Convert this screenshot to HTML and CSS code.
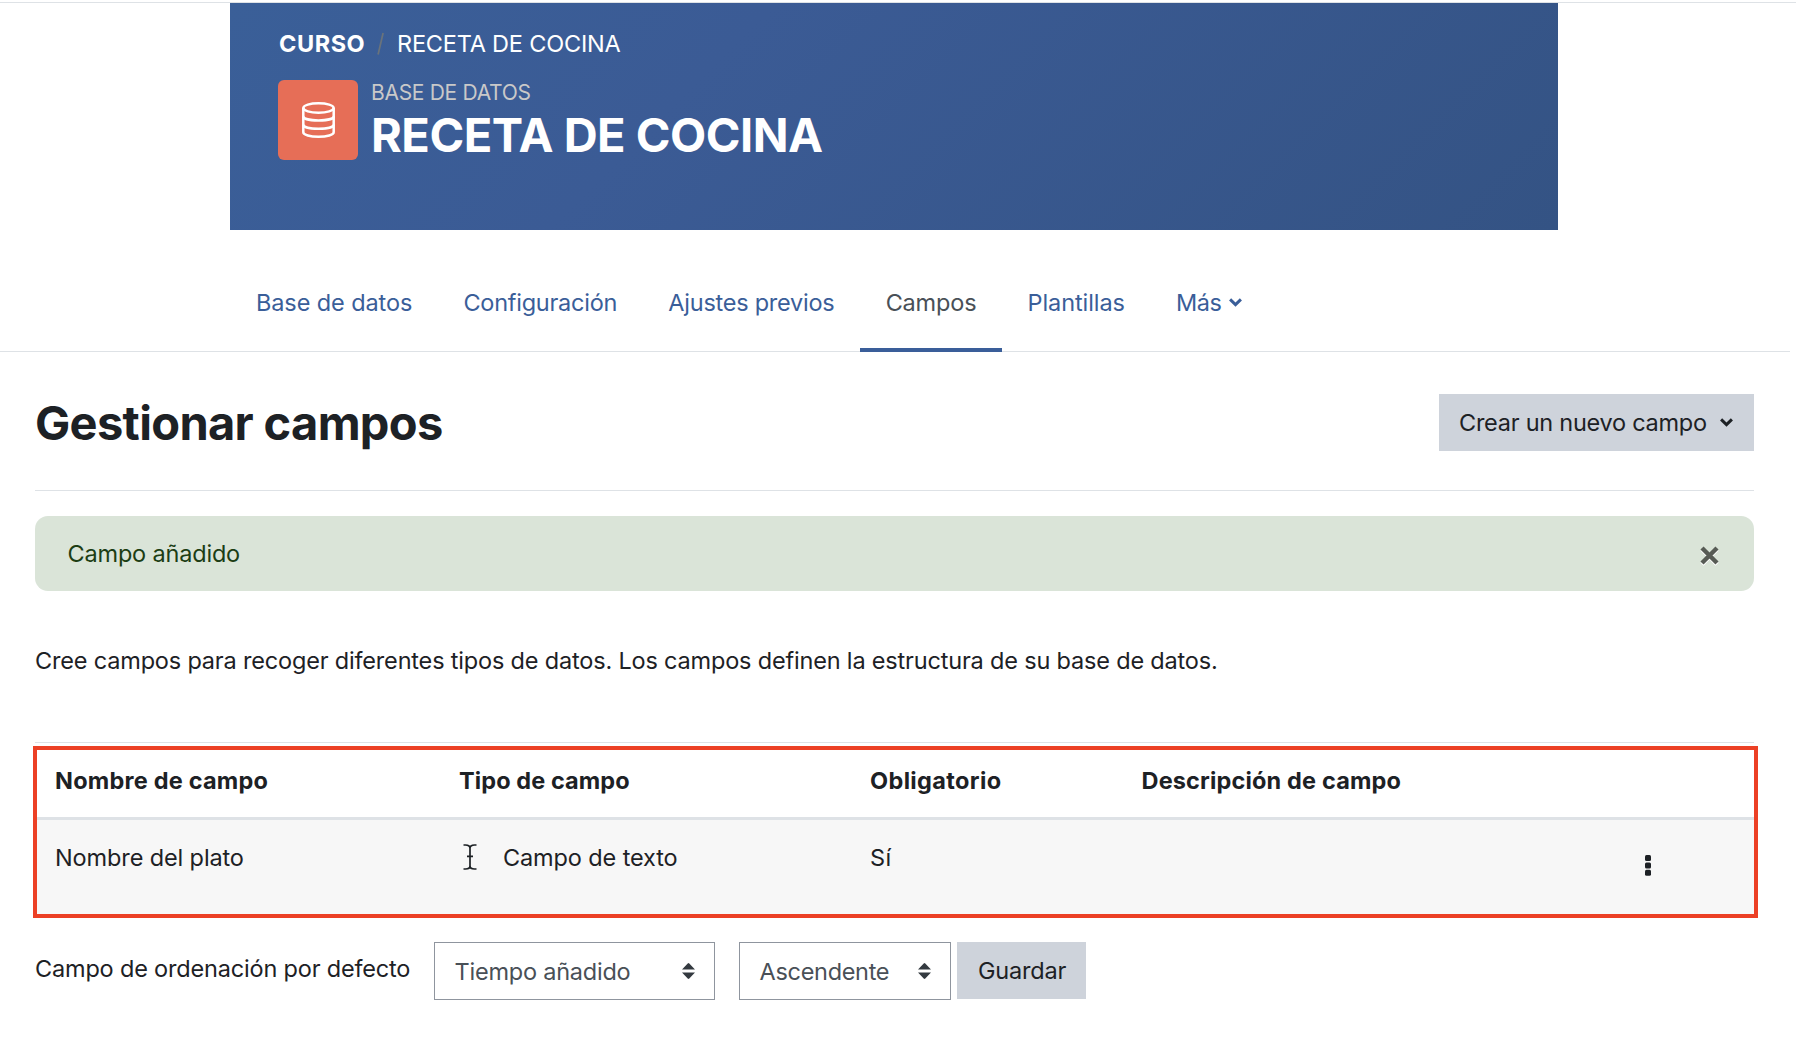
FILE: index.html
```html
<!DOCTYPE html>
<html lang="es">
<head>
<meta charset="utf-8">
<title>Receta de cocina</title>
<link rel="stylesheet" href="styles.css">
</head>
<body>
<header class="page-header">
  <nav class="breadcrumb">
    <a class="crumb-course">CURSO</a>
    <svg class="crumb-slash" viewBox="0 0 8 24" aria-hidden="true"><path d="M6.1 1 1.1 22.5" stroke="#6a737b" stroke-width="1.7"/></svg>
    <a class="crumb-current">RECETA DE COCINA</a>
  </nav>
  <div class="activity">
    <div class="activity-icon">
      <svg viewBox="0 0 33 36" fill="none" stroke="#fff" stroke-width="2.5"><ellipse cx="16.5" cy="6" rx="15.2" ry="4.7"/><path d="M1.3 6V30.2C1.3 32.9 8.1 34.7 16.5 34.7S31.7 32.9 31.7 30.2V6"/><path d="M1.3 14.2C1.3 16.8 8.1 18.5 16.5 18.5S31.7 16.8 31.7 14.2M1.3 22.5C1.3 25.1 8.1 26.8 16.5 26.8S31.7 25.1 31.7 22.5"/></svg>
    </div>
    <div class="activity-text">
      <div class="activity-type">BASE DE DATOS</div>
      <h1 class="activity-name">RECETA DE COCINA</h1>
    </div>
  </div>
</header>
<nav class="tabs">
  <a class="tab t-base">Base de datos</a>
  <a class="tab t-conf">Configuración</a>
  <a class="tab t-ajus">Ajustes previos</a>
  <a class="tab t-camp active">Campos</a>
  <a class="tab t-plan">Plantillas</a>
  <a class="tab t-mas">Más<svg class="chevron" viewBox="0 0 13 9" fill="none" stroke="currentColor" stroke-width="3"><path d="M1.1 1.4 6.5 6.6 11.9 1.4"/></svg></a>
</nav>
<main class="content">
  <div class="title-row">
    <h2 class="title">Gestionar campos</h2>
    <button class="btn btn-create">Crear un nuevo campo<svg class="chevron" viewBox="0 0 13 9" fill="none" stroke="currentColor" stroke-width="3"><path d="M1.1 1.4 6.5 6.6 11.9 1.4"/></svg></button>
  </div>
  <div class="alert">
    <span>Campo añadido</span>
    <svg class="close" viewBox="0 0 19 20" fill="none" stroke-width="4.4"><path d="M2 3.2 17 18.2M17 3.2 2 18.2" stroke="#fff"/><path d="M2 2 17 17M17 2 2 17" stroke="#575b55"/></svg>
  </div>
  <p class="intro">Cree campos para recoger diferentes tipos de datos. Los campos definen la estructura de su base de datos.</p>
  <div class="fields">
    <div class="row head">
      <div class="c-name">Nombre de campo</div>
      <div class="c-type">Tipo de campo</div>
      <div class="c-req">Obligatorio</div>
      <div class="c-desc">Descripción de campo</div>
    </div>
    <div class="row item">
      <div>Nombre del plato</div>
      <div class="type"><svg class="ibeam" viewBox="0 0 14 26" fill="none" stroke="#1d2125" stroke-width="1.7"><path d="M.5 1H2.5C5 1 7 2.2 7 4V22C7 23.8 5 25 2.5 25H.5M13.5 1H11.5C9 1 7 2.2 7 4M7 22C7 23.8 9 25 11.5 25H13.5M4 12.3H10"/></svg>Campo de texto</div>
      <div class="yes">Sí</div>
      <div></div>
      <div class="menu"><svg class="dots" viewBox="0 0 6 21" fill="#1d2125"><rect width="6" height="6" rx="1.5"/><rect y="7.4" width="6" height="6" rx="1.5"/><rect y="14.8" width="6" height="6" rx="1.5"/></svg></div>
    </div>
  </div>
  <div class="sort">
    <span class="sort-label">Campo de ordenación por defecto</span>
    <div class="select s-field"><span>Tiempo añadido</span><svg class="arrows" viewBox="0 0 13 16" fill="#343a40"><path d="M0 6.5 5.7.4Q6.5-.2 7.3.4L13 6.5zM0 9.5 5.7 15.6Q6.5 16.2 7.3 15.6L13 9.5z"/></svg></div>
    <div class="select s-dir"><span>Ascendente</span><svg class="arrows" viewBox="0 0 13 16" fill="#343a40"><path d="M0 6.5 5.7.4Q6.5-.2 7.3.4L13 6.5zM0 9.5 5.7 15.6Q6.5 16.2 7.3 15.6L13 9.5z"/></svg></div>
    <button class="btn btn-save">Guardar</button>
  </div>
</main>
</body>
</html>
```
FILE: styles.css
```css
* { box-sizing: border-box; }
body {
  margin: 0;
  padding-top: 2px;
  background: #fff;
  color: #1d2125;
  font: 400 23.5px/36px Inter, sans-serif;
  letter-spacing: -0.18px;
  white-space: nowrap;
}
h1, h2, p { margin: 0; }
svg { display: block; flex: none; }
body::before { content: ""; display: block; height: 1px; background: #dee2e6; }

.page-header {
  width: 1328px;
  height: 227px;
  margin-left: 230px;
  padding: 23px 48px 0;
  color: #fff;
  background: linear-gradient(135deg, #3a5f98 0%, #3b5b95 35%, #345384 100%);
}
.breadcrumb { display: flex; align-items: center; height: 36px; padding-left: 1px; }
.crumb-course { font-weight: 700; letter-spacing: .55px; }
.crumb-slash { width: 8px; height: 24px; margin: 0 11.5px 0 12.2px; }
.crumb-current { letter-spacing: -.2px; }
.activity { display: flex; margin-top: 18px; }
.activity-icon {
  display: flex; align-items: center; justify-content: center;
  width: 80px; height: 80px;
  padding-left: 1px;
  border-radius: 6px;
  background: #e66e57;
}
.activity-icon svg { width: 33px; height: 36px; }
.activity-text { margin-left: 13px; }
.activity-type { font-size: 21px; line-height: 26px; letter-spacing: -.3px; color: #c9c9c9; }
.activity-name { margin-top: 1px; font-size: 47px; line-height: 56px; font-weight: 700; letter-spacing: -.503px; }

.tabs {
  display: flex;
  width: 1790px;
  height: 122px;
  padding: 23px 0 0 230.4px;
  border-bottom: 1px solid #dee2e6;
}
.tab { display: flex; align-items: center; height: 99px; padding: 0 25.6px; color: #3a5e99; line-height: 99px; }
.tab.active { color: #495057; box-shadow: inset 0 -4px #3a5e99; }
.t-base { letter-spacing: -.1px; }
.t-conf { letter-spacing: -.25px; }
.t-ajus { letter-spacing: -.25px; }
.t-camp { letter-spacing: -.185px; }
.t-plan { letter-spacing: -.082px; }
.t-mas { letter-spacing: -.462px; }
.chevron { width: 13px; height: 9px; }
.t-mas .chevron { margin-left: 7.5px; }

.content { width: 1719px; margin-left: 35px; }
.title-row {
  display: flex; align-items: center; justify-content: space-between;
  height: 139px;
  padding: 0 0 1px;
  border-bottom: 1px solid #dee2e6;
}
.title { margin-top: 4px; font-size: 47px; line-height: 60px; font-weight: 700; letter-spacing: -.662px; }
.btn {
  display: flex; align-items: center;
  height: 57px;
  padding: 0 20px;
  border: 0;
  background: #ced3db;
  color: #1d2125;
  font: inherit;
  letter-spacing: -.194px;
}
.btn-create { width: 315px; margin-top: 4px; letter-spacing: -.257px; }
.btn-create .chevron { margin-left: 13.5px; }
.btn-save { width: 129px; padding: 1px 0 0 21px; }
.alert {
  display: flex; align-items: center; justify-content: space-between;
  height: 75px;
  margin-top: 25px;
  padding: 0 35px 0 32.5px;
  border-radius: 13px;
  background: #dae4d8;
  color: #1c3d14;
  letter-spacing: -.18px;
}
.close { width: 19px; height: 20px; margin-top: 5px; }
.intro { margin-top: 52px; }

.fields {
  width: 1725px;
  height: 172px;
  margin: 67px 0 0 -2px;
  border: 4px solid #ec4025;
  position: relative;
}
/* top rule of the table, seen just above the highlight frame */
.fields::before { content: ""; position: absolute; left: -2px; right: 0; top: -8px; height: 1px; background: #dee2e6; }
.row { display: grid; grid-template-columns: 404px 411px 271.5px 493.5px 1fr; padding-left: 18px; }
.head { height: 70px; padding-top: 13px; font-weight: 700; }
.c-name { letter-spacing: .216px; }
.c-type { letter-spacing: .09px; }
.c-req { letter-spacing: .36px; }
.c-desc { letter-spacing: .16px; }
.item { height: 94px; padding-top: 20px; background: #f7f7f7; letter-spacing: -.12px; box-shadow: 0 -3px #dee2e6; }
.type { display: flex; }
.ibeam { width: 14px; height: 26px; margin: 4px 26px 0 4px; }
.yes { letter-spacing: .4px; }
.menu { margin-top: 15px; margin-left: 10px; }
.dots { width: 6px; height: 21px; }

.sort { display: flex; margin-top: 24px; }
.sort-label { width: 399px; margin-top: 9px; }
.select {
  display: flex; align-items: center; justify-content: space-between;
  height: 58px;
  padding: 0 19px 0 19.5px;
  border: 1px solid #8f959e;
  color: #495057;
}
.select span { margin-top: 2px; }
.s-field { width: 281px; letter-spacing: -.22px; }
.s-dir { width: 212px; margin: 0 6px 0 24px; letter-spacing: -.3px; }
.arrows { width: 13px; height: 16px; }
```
